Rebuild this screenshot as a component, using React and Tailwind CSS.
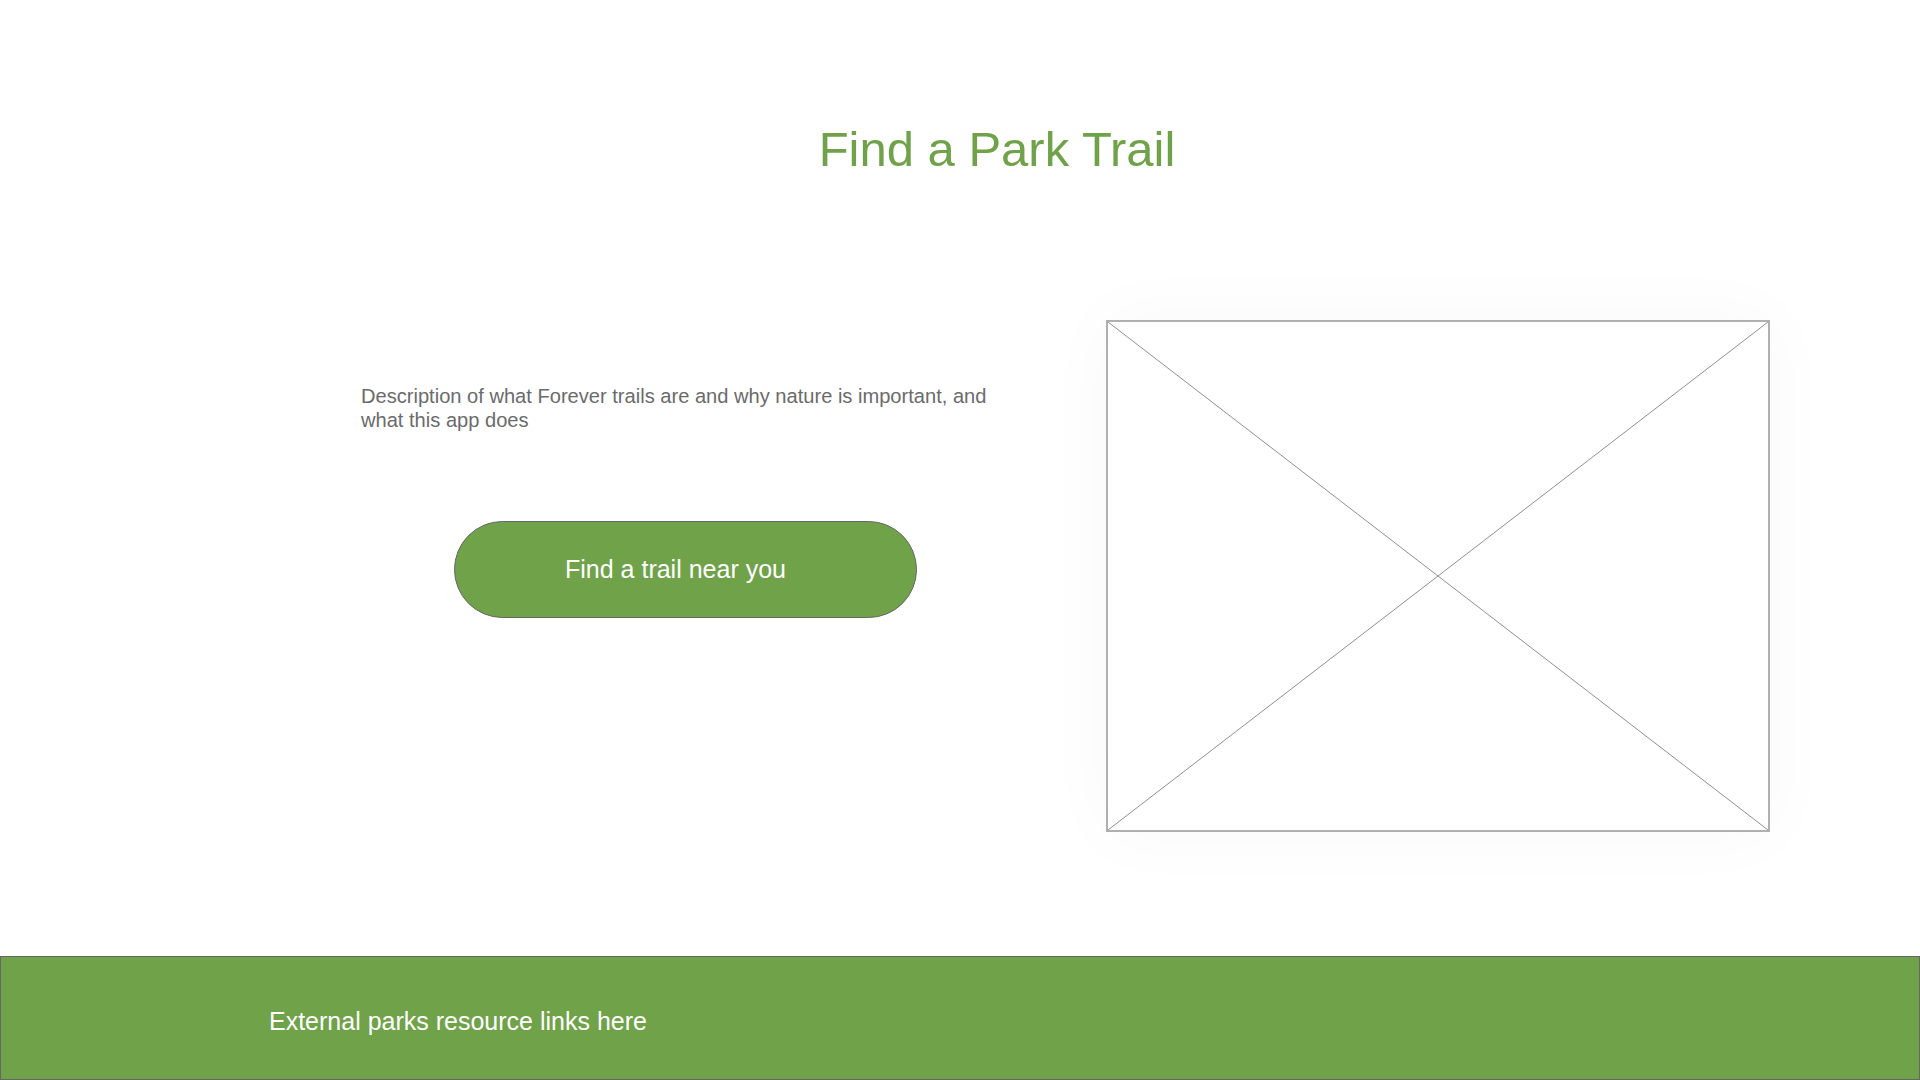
import React from "react";

const PlaceholderImage = () => {
  return (
    <div className="relative w-[664px] h-[512px] border-2 border-[#b0b0b0] bg-white shadow-[0_0_70px_rgba(0,0,0,0.03)]">
      <svg className="absolute inset-0 w-full h-full" viewBox="0 0 100 100" preserveAspectRatio="none">
        <line x1="0" y1="0" x2="100" y2="100" stroke="#8f8f8f" strokeWidth="1" vectorEffect="non-scaling-stroke" />
        <line x1="100" y1="0" x2="0" y2="100" stroke="#8f8f8f" strokeWidth="1" vectorEffect="non-scaling-stroke" />
      </svg>
    </div>
  );
};

const App = () => {
  return (
    <div className="h-screen w-full flex flex-col bg-white font-['Liberation_Sans',Arial,sans-serif]">
      <main className="flex-1">
        <h1 className="pt-[125px] pl-[74px] text-center text-[49px] leading-none text-[#70a24a]">
          Find a Park Trail
        </h1>

        <div className="mt-[146px] flex">
          <div className="ml-[361px] w-[645px]">
            <p className="mt-[64px] text-[20.1px] leading-[24px] text-[#6b6b6b]">
              Description of what Forever trails are and why nature is important, and what this app does
            </p>
            <button
              type="button"
              className="mt-[89px] ml-[93px] w-[463px] h-[97px] rounded-full border border-[#666] bg-[#70a24a] pr-[20px] text-[25px] text-white"
            >
              Find a trail near you
            </button>
          </div>
          <div className="ml-[100px]">
            <PlaceholderImage />
          </div>
        </div>
      </main>

      <footer className="h-[124px] border border-[#666] bg-[#70a24a] flex items-center pl-[268px] pt-[8px]">
        <span className="text-[25px] text-white">External parks resource links here</span>
      </footer>
    </div>
  );
};

export default App;
